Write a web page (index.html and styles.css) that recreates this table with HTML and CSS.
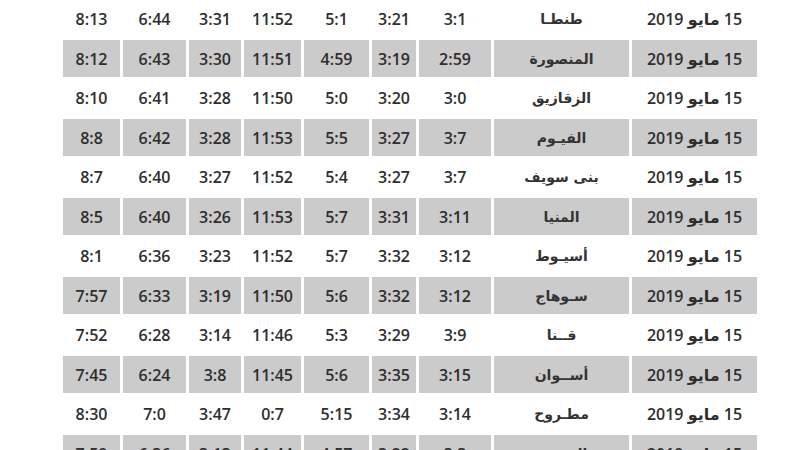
FILE: index.html
```html
<!DOCTYPE html>
<html lang="ar" dir="rtl">
<head>
<meta charset="utf-8">
<title>مواقيت الصلاة</title>
<link rel="stylesheet" href="styles.css">
</head>
<body>
<div class="page">
  <div class="times">
    <div class="row"><div class="cell date">15 مايو 2019</div><div class="cell city">طنطـا</div><div class="cell">3:1</div><div class="cell">3:21</div><div class="cell">5:1</div><div class="cell">11:52</div><div class="cell">3:31</div><div class="cell">6:44</div><div class="cell">8:13</div></div>
    <div class="row alt"><div class="cell date">15 مايو 2019</div><div class="cell city">المنصورة</div><div class="cell">2:59</div><div class="cell">3:19</div><div class="cell">4:59</div><div class="cell">11:51</div><div class="cell">3:30</div><div class="cell">6:43</div><div class="cell">8:12</div></div>
    <div class="row"><div class="cell date">15 مايو 2019</div><div class="cell city">الزقازيق</div><div class="cell">3:0</div><div class="cell">3:20</div><div class="cell">5:0</div><div class="cell">11:50</div><div class="cell">3:28</div><div class="cell">6:41</div><div class="cell">8:10</div></div>
    <div class="row alt"><div class="cell date">15 مايو 2019</div><div class="cell city">الفيـوم</div><div class="cell">3:7</div><div class="cell">3:27</div><div class="cell">5:5</div><div class="cell">11:53</div><div class="cell">3:28</div><div class="cell">6:42</div><div class="cell">8:8</div></div>
    <div class="row"><div class="cell date">15 مايو 2019</div><div class="cell city">بنى سويف</div><div class="cell">3:7</div><div class="cell">3:27</div><div class="cell">5:4</div><div class="cell">11:52</div><div class="cell">3:27</div><div class="cell">6:40</div><div class="cell">8:7</div></div>
    <div class="row alt"><div class="cell date">15 مايو 2019</div><div class="cell city">المنيا</div><div class="cell">3:11</div><div class="cell">3:31</div><div class="cell">5:7</div><div class="cell">11:53</div><div class="cell">3:26</div><div class="cell">6:40</div><div class="cell">8:5</div></div>
    <div class="row"><div class="cell date">15 مايو 2019</div><div class="cell city">أسيـوط</div><div class="cell">3:12</div><div class="cell">3:32</div><div class="cell">5:7</div><div class="cell">11:52</div><div class="cell">3:23</div><div class="cell">6:36</div><div class="cell">8:1</div></div>
    <div class="row alt"><div class="cell date">15 مايو 2019</div><div class="cell city">سـوهاج</div><div class="cell">3:12</div><div class="cell">3:32</div><div class="cell">5:6</div><div class="cell">11:50</div><div class="cell">3:19</div><div class="cell">6:33</div><div class="cell">7:57</div></div>
    <div class="row"><div class="cell date">15 مايو 2019</div><div class="cell city">قــنا</div><div class="cell">3:9</div><div class="cell">3:29</div><div class="cell">5:3</div><div class="cell">11:46</div><div class="cell">3:14</div><div class="cell">6:28</div><div class="cell">7:52</div></div>
    <div class="row alt"><div class="cell date">15 مايو 2019</div><div class="cell city">أســوان</div><div class="cell">3:15</div><div class="cell">3:35</div><div class="cell">5:6</div><div class="cell">11:45</div><div class="cell">3:8</div><div class="cell">6:24</div><div class="cell">7:45</div></div>
    <div class="row"><div class="cell date">15 مايو 2019</div><div class="cell city">مطـروح</div><div class="cell">3:14</div><div class="cell">3:34</div><div class="cell">5:15</div><div class="cell">0:7</div><div class="cell">3:47</div><div class="cell">7:0</div><div class="cell">8:30</div></div>
    <div class="row alt"><div class="cell date">15 مايو 2019</div><div class="cell city">الغردقة</div><div class="cell">3:3</div><div class="cell">3:22</div><div class="cell">4:57</div><div class="cell">11:44</div><div class="cell">3:13</div><div class="cell">6:36</div><div class="cell">7:59</div></div>
  </div>
</div>
</body>
</html>
```

FILE: styles.css
```css
html, body {
  margin: 0;
  padding: 0;
  background: #ffffff;
}

.page {
  width: 800px;
  height: 450px;
  overflow: hidden;
  box-sizing: border-box;
  padding-top: 0.5px;
  padding-right: 43px;
}

.times {
  display: flex;
  flex-direction: column;
  row-gap: 2.5px;
  width: 694px;
  font-family: "Open Sans", "DejaVu Sans", sans-serif;
  font-weight: 600;
  font-size: 16px;
  color: #2e2e2e;
}

.row {
  display: grid;
  grid-template-columns: 125px 135px 72px 44px 65px 57px 52px 63px 57px;
  column-gap: 3px;
  height: 37px;
}

.cell {
  display: flex;
  align-items: center;
  justify-content: center;
  white-space: nowrap;
}

.row.alt .cell {
  background: #cbcbcb;
}

.city {
  font-family: "DejaVu Sans", sans-serif;
  font-weight: 700;
  font-size: 14px;
  color: #333333;
}

.date {
  font-family: "Open Sans", "DejaVu Sans", sans-serif;
}
```
